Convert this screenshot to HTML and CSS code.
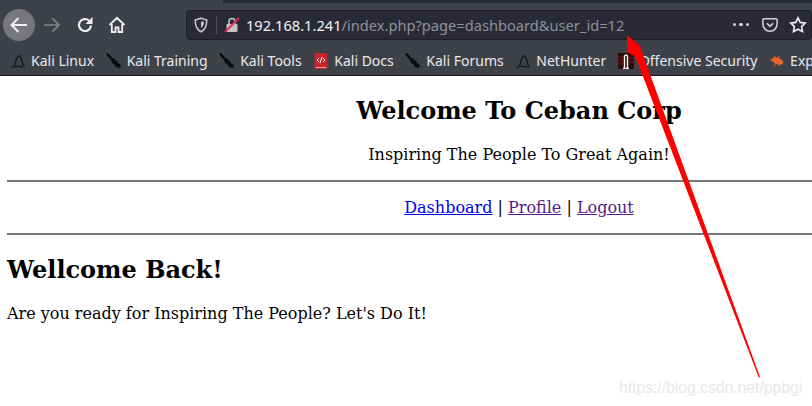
FILE: index.html
```html
<!DOCTYPE html>
<html lang="en">
<head>
    <meta charset="UTF-8">
    <meta name="viewport" content="width=device-width, initial-scale=1.0">
    <title>Ceban Corp</title>
    <link rel="stylesheet" href="styles.css">
</head>
<body>
    <div class="toolbar">
        <span class="tab-edge"></span>
        <div class="nav-buttons">
            <span class="nav-btn back">
                <svg width="24" height="24" viewBox="0 0 24 24"><path d="M20 12H5M11.500 5 4.500 12l7 7" fill="none" stroke="#f0f0f2" stroke-width="2"/></svg>
            </span>
            <span class="nav-btn forward">
                <svg width="20" height="20" viewBox="0 0 20 20"><path d="M2 10h15M10.500 3.500 17 10l-6.500 6.500" fill="none" stroke="#85868b" stroke-width="1.700"/></svg>
            </span>
            <span class="nav-btn reload">
                <svg width="18" height="18" viewBox="0 0 18 18"><path d="M15 9.500a6 6 0 1 1-2-5" fill="none" stroke="#f0f0f2" stroke-width="2.200"/><path d="M16.500 1v7H9.500z" fill="#f0f0f2"/></svg>
            </span>
            <span class="nav-btn home">
                <svg width="18" height="18" viewBox="0 0 18 18"><path d="M1.500 9 9 1.800 16.500 9M3.800 8v8h3.700v-4.500h3V16h3.700V8" fill="none" stroke="#f0f0f2" stroke-width="1.800"/></svg>
            </span>
        </div>
        <div class="urlbar">
            <svg class="shield" width="14" height="16" viewBox="0 0 14 16"><path d="M7 1.200 12.800 3c0 5-1 9.500-5.800 11.800C2.200 12.500 1.200 8 1.200 3z" fill="none" stroke="#c4c4c8" stroke-width="1.600"/><path d="M7 4.500h3c0 3-.8 5-3 6.500z" fill="#c4c4c8"/></svg>
            <span class="url-sep"></span>
            <svg class="lock" width="16" height="16" viewBox="0 0 16 16"><rect x="2.500" y="7" width="11" height="8" rx="1" fill="#c4c4c8"/><path d="M5 7V4.500a3 3 0 0 1 6 0V7" fill="none" stroke="#c4c4c8" stroke-width="1.600"/><path d="M1 15 15 1" stroke="#e22850" stroke-width="1.800"/></svg>
            <span class="url-text"><span class="url-host">192.168.1.241</span>/index.php?page=dashboard&amp;user_id=12</span>
            <span class="url-actions">
                <span class="dots"><i></i><i></i><i></i></span>
                <svg width="16" height="16" viewBox="0 0 18 18"><path d="M2.500 2h13A1.500 1.500 0 0 1 17 3.500V8a8 8 0 0 1-16 0V3.500A1.500 1.500 0 0 1 2.500 2z" fill="none" stroke="#d4d4d6" stroke-width="1.700"/><path d="m5.500 7 3.500 3.500L12.500 7" fill="none" stroke="#d4d4d6" stroke-width="1.900"/></svg>
                <svg width="18" height="18" viewBox="0 0 18 18"><path d="m9 1.800 2.200 4.600 5 .7-3.600 3.500.9 5L9 13.200l-4.500 2.400.9-5L1.800 7.100l5-.7z" fill="none" stroke="#f0f0f2" stroke-width="1.600"/></svg>
            </span>
        </div>
    </div>

    <div class="bookmarks">
        <span class="bookmark">
            <svg width="16" height="16" viewBox="0 0 16 16"><path d="M2 15c2-1 3-2 3.500-5S7 3.500 9 3c2 0 2.500 3 3 5.500.3 2 1 4 2.500 5.500M1.500 14.500c3-1.500 8-1.500 11 0" fill="none" stroke="#17181b" stroke-width="1.500"/></svg>
            Kali Linux
        </span>
        <span class="bookmark">
            <svg width="16" height="16" viewBox="0 0 16 16"><path d="M0 1l2-1 3 3 1 2 2 0 1 2 2 1 1 2 2 1 1 3-2 1-3-1-2-3-2-1-1-3-2-2z" fill="#0c0c0e"/></svg>
            Kali Training
        </span>
        <span class="bookmark">
            <svg width="16" height="16" viewBox="0 0 16 16"><path d="M0 1l2-1 3 3 1 2 2 0 1 2 2 1 1 2 2 1 1 3-2 1-3-1-2-3-2-1-1-3-2-2z" fill="#0c0c0e"/></svg>
            Kali Tools
        </span>
        <span class="bookmark">
            <svg width="16" height="16" viewBox="0 0 16 16"><rect x="1.500" y="0" width="13" height="16" rx="1.500" fill="#c8242c"/><rect x="2.500" y="14" width="11" height="1" fill="#e9a0a0"/><path d="M6 5 4 7l2 2M10 5l2 2-2 2M7 10l2-6" fill="none" stroke="#fff" stroke-width="1"/></svg>
            Kali Docs
        </span>
        <span class="bookmark">
            <svg width="16" height="16" viewBox="0 0 16 16"><path d="M0 1l2-1 3 3 1 2 2 0 1 2 2 1 1 2 2 1 1 3-2 1-3-1-2-3-2-1-1-3-2-2z" fill="#0c0c0e"/></svg>
            Kali Forums
        </span>
        <span class="bookmark">
            <svg width="16" height="16" viewBox="0 0 16 16"><path d="M2 15c2-1 3-2 3.500-5S7 3.500 9 3c2 0 2.500 3 3 5.500.3 2 1 4 2.500 5.500M1.500 14.500c3-1.500 8-1.500 11 0" fill="none" stroke="#17181b" stroke-width="1.500"/></svg>
            NetHunter
        </span>
        <span class="bookmark">
            <svg width="16" height="16" viewBox="0 0 16 16"><rect width="16" height="16" fill="#2e0a0a"/><path d="M0 4h6M0 7h5M0 10h5M11 5h5M11 9h5" stroke="#7a1c1c" stroke-width="1"/><path d="M6.500 15V3a1.600 1.600 0 0 1 3 0v12M5 15.500h6" fill="none" stroke="#f2f2f2" stroke-width="1.400"/></svg>
            Offensive Security
        </span>
        <span class="bookmark">
            <svg width="16" height="16" viewBox="0 0 16 16"><ellipse cx="8.500" cy="8" rx="6" ry="3.200" fill="#e8672a" transform="rotate(20 8.500 8)"/><path d="M1 7h3M5 3l2 3M10 3 9 6M5 13l2-3M10 13 9 10" stroke="#e8672a" stroke-width="1"/></svg>
            Exp
        </span>
    </div>

    <div class="page">
        <div class="page-inner">
            <h1 class="site-title">Welcome To Ceban Corp</h1>
            <p class="tagline">Inspiring The People To Great Again!</p>
            <hr class="rule">
            <p class="menu"><a href="#">Dashboard</a> | <a class="seen" href="#">Profile</a> | <a class="seen" href="#">Logout</a></p>
            <hr class="rule">
            <h2 class="welcome">Wellcome Back!</h2>
            <p class="lead">Are you ready for Inspiring The People? Let's Do It!</p>
        </div>
    </div>

    <svg class="arrow" width="812" height="406" viewBox="0 0 812 406">
        <path d="M627 35 641 47 640.500 48 760 377 758.800 377.500 635.500 57 627.500 52z" fill="#f00"/>
    </svg>
    <div class="watermark">https://blog.csdn.net/ppbgi</div>
</body>
</html>
```

FILE: styles.css
```css
html, body {
    margin: 0;
    height: 100%;
    overflow: hidden;
    background-color: #fff;
}
body {
    position: relative;
    width: 812px;
    height: 406px;
    display: flex;
    flex-direction: column;
}
.toolbar {
    position: relative;
    display: flex;
    align-items: center;
    flex-shrink: 0;
    height: 46px;
    background-color: #3f4149;
    padding: 3px 0 0 3px;
    box-sizing: border-box;
}
.tab-edge {
    position: absolute;
    left: 223px;
    right: 0;
    top: 0;
    height: 3px;
    background-color: #2a2a36;
}
.nav-buttons {
    display: flex;
    align-items: center;
    width: 183px;
}
.nav-btn {
    display: flex;
    align-items: center;
    justify-content: center;
}
.back {
    width: 32px;
    height: 32px;
    border-radius: 50%;
    background-color: #77787d;
}
.forward {
    width: 20px;
    margin-left: 7px;
}
.reload {
    width: 18px;
    margin-left: 14px;
}
.home {
    width: 18px;
    margin-left: 14px;
}
.urlbar {
    display: flex;
    align-items: center;
    flex: 1;
    height: 30px;
    background-color: #2a2a36;
    border: 1px solid #1f1f28;
    border-radius: 4px;
    box-sizing: border-box;
    padding-left: 7px;
}
.url-sep {
    width: 1px;
    height: 18px;
    background-color: #4c4c58;
    margin: 0 7px 0 8px;
}
.url-text {
    margin-left: 6px;
    font: 14.650px "Noto Sans", sans-serif;
    color: #8d919a;
    white-space: nowrap;
}
.url-host {
    color: #f4f4f6;
}
.url-actions {
    display: flex;
    align-items: center;
    gap: 11px;
    margin-left: auto;
    padding-right: 4px;
}
.dots {
    display: flex;
    gap: 3px;
    margin-right: 2px;
}
.dots i {
    width: 3.500px;
    height: 3.500px;
    border-radius: 50%;
    background-color: #d4d4d6;
}
.bookmarks {
    display: flex;
    align-items: center;
    gap: 11.600px;
    flex-shrink: 0;
    height: 30px;
    background-color: #3f4149;
    border-bottom: 1px solid #17171c;
    box-sizing: border-box;
    padding-left: 10px;
    font: 14px "Noto Sans", sans-serif;
    color: #e8e9ec;
    overflow: hidden;
    white-space: nowrap;
}
.bookmark {
    display: flex;
    align-items: center;
    gap: 5px;
}
.page {
    flex: 1;
    overflow: hidden;
    font-family: "DejaVu Serif", serif;
    font-size: 16px;
    color: #000;
}
.page-inner {
    width: 1024px;
    padding: 0 7px;
}
.site-title {
    font-size: 24px;
    text-align: center;
    margin: 20px 0 0;
}
.tagline {
    text-align: center;
    margin: 20px 0 0;
}
.rule {
    margin: 16px 0 0;
    border: 0;
    border-top: 2px solid #777;
}
.menu {
    text-align: center;
    margin: 16px 0 0;
}
.menu a {
    color: #00e;
}
.menu a.seen {
    color: #551a8b;
}
.welcome {
    font-size: 24px;
    margin: 20px 0 0;
}
.lead {
    margin: 20px 0 0;
}
.arrow {
    position: absolute;
    left: 0;
    top: 0;
    pointer-events: none;
}
.watermark {
    position: absolute;
    left: 619px;
    top: 379px;
    font: 15.700px "Liberation Sans", sans-serif;
    color: #e8e8e8;
    white-space: nowrap;
}
```
